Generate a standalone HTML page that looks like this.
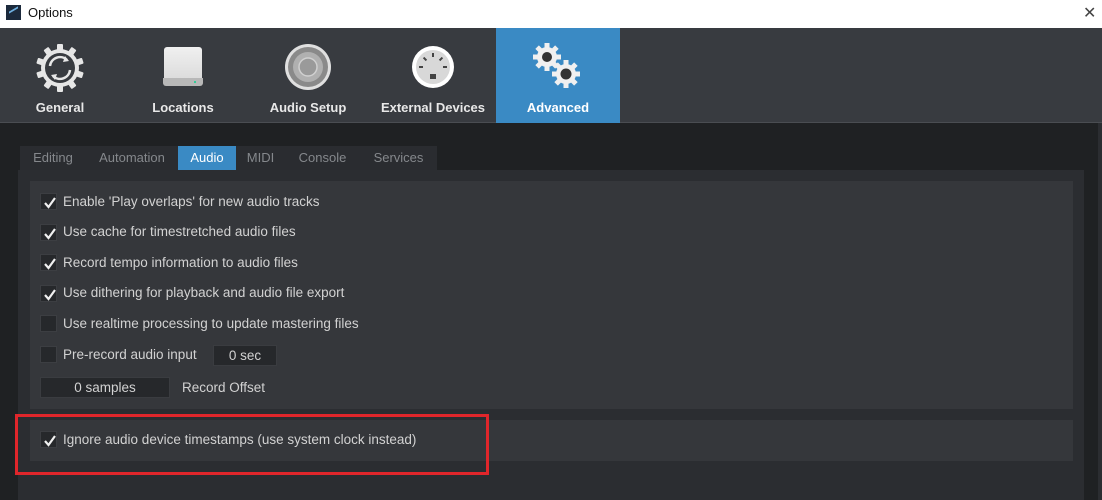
<!DOCTYPE html>
<html><head><meta charset="utf-8"><style>
*{margin:0;padding:0;box-sizing:border-box}
body{width:1102px;height:500px;overflow:hidden;background:#1f2123;font-family:"Liberation Sans",sans-serif;position:relative}
.a{position:absolute}
.title{left:0;top:0;width:1102px;height:28px;background:#fff}
.tb{left:0;top:28px;width:1102px;height:95px;background:#383b40;border-bottom:1px solid #4a4d52}
.lbl{position:absolute;top:100px;color:#e8e8e8;font-weight:bold;font-size:13px;text-align:center;width:124px}
.tab{position:absolute;top:146px;height:24px;line-height:24px;font-size:13px;color:#85888c;text-align:center;background:#2a2c30}
.cb{position:absolute;left:40px;width:17px;height:17px;background:#26282b;border:1px solid #3c3e42}
.cb svg{position:absolute;left:1px;top:1px}
.t{position:absolute;left:63px;font-size:13.5px;color:#d2d2d2}
.fld{position:absolute;background:#26282b;border:1px solid #3a3c40;color:#d2d2d2;font-size:13.5px;text-align:center}
</style></head><body>
<div class="a title"></div>
<div class="a" style="left:6px;top:5px;width:15px;height:15px;background:#1c2a3c"><div style="position:absolute;left:3px;top:4px;width:9px;height:7px;border-top:2px solid #6fb0e0;transform:skewY(-30deg)"></div></div>
<div class="a" style="left:28px;top:5px;font-size:13px;color:#111">Options</div>
<div class="a" style="left:1083px;top:3px;font-size:16px;color:#444">✕</div>
<div class="a tb"></div>
<div class="a" style="left:496px;top:28px;width:124px;height:95px;background:#3a8ac4"></div>
<svg class="a" style="left:34px;top:42px" width="52" height="52" viewBox="0 0 52 52">
<g fill="#e6e6e6"><circle cx="26" cy="26" r="19"/>
<g id="tt"><rect x="23" y="2" width="6" height="8" rx="1"/></g>
<use href="#tt" transform="rotate(36 26 26)"/><use href="#tt" transform="rotate(72 26 26)"/><use href="#tt" transform="rotate(108 26 26)"/><use href="#tt" transform="rotate(144 26 26)"/><use href="#tt" transform="rotate(180 26 26)"/><use href="#tt" transform="rotate(216 26 26)"/><use href="#tt" transform="rotate(252 26 26)"/><use href="#tt" transform="rotate(288 26 26)"/><use href="#tt" transform="rotate(324 26 26)"/></g>
<circle cx="26" cy="26" r="15" fill="#383b40"/>
<path d="M16 24a10 10 0 0 1 17-6M36 28a10 10 0 0 1-17 6" stroke="#e6e6e6" stroke-width="2.5" fill="none"/>
<path d="M31 14l4 5-6 1zM21 38l-4-5 6-1z" fill="#e6e6e6"/>
</svg>
<div class="a" style="left:164px;top:47px;width:38px;height:38px;background:linear-gradient(#f0f0f0,#d8d8d8);border-radius:3px"></div>
<div class="a" style="left:163px;top:78px;width:40px;height:8px;background:#b8b8b8;border-radius:0 0 3px 3px"></div>
<div class="a" style="left:194px;top:81px;width:2px;height:2px;background:#3c9"></div>
<svg class="a" style="left:284px;top:43px" width="48" height="48"><circle cx="24" cy="24" r="23" fill="#e0e0e0"/><circle cx="24" cy="24" r="20" fill="#8a8a8a"/><circle cx="24" cy="24" r="15" fill="#b0b0b0"/><circle cx="24" cy="24" r="9" fill="#9a9a9a" stroke="#d0d0d0" stroke-width="1.5"/></svg>
<svg class="a" style="left:411px;top:45px" width="44" height="44"><circle cx="22" cy="22" r="21" fill="#fff"/><circle cx="22" cy="22" r="17" fill="#d8d8d8"/><g fill="#444"><rect x="21" y="8" width="2" height="4"/><rect x="13" y="12" width="2" height="4" transform="rotate(-45 14 14)"/><rect x="29" y="12" width="2" height="4" transform="rotate(45 30 14)"/><rect x="8" y="21" width="4" height="2"/><rect x="32" y="21" width="4" height="2"/><rect x="19" y="29" width="6" height="5"/></g></svg>
<svg class="a" style="left:530px;top:40px" width="52" height="50">
<g fill="#f0f0f0"><circle cx="17" cy="17" r="10"/><g id="g2"><rect x="14.5" y="3" width="5" height="6"/></g><use href="#g2" transform="rotate(45 17 17)"/><use href="#g2" transform="rotate(90 17 17)"/><use href="#g2" transform="rotate(135 17 17)"/><use href="#g2" transform="rotate(180 17 17)"/><use href="#g2" transform="rotate(225 17 17)"/><use href="#g2" transform="rotate(270 17 17)"/><use href="#g2" transform="rotate(315 17 17)"/>
<g transform="translate(19 17)"><circle cx="17" cy="17" r="10"/><use href="#g2"/><use href="#g2" transform="rotate(45 17 17)"/><use href="#g2" transform="rotate(90 17 17)"/><use href="#g2" transform="rotate(135 17 17)"/><use href="#g2" transform="rotate(180 17 17)"/><use href="#g2" transform="rotate(225 17 17)"/><use href="#g2" transform="rotate(270 17 17)"/><use href="#g2" transform="rotate(315 17 17)"/></g></g>
<circle cx="17" cy="17" r="5" fill="#333"/><circle cx="36" cy="34" r="5.5" fill="#333"/></svg>
<div class="lbl" style="left:-2px">General</div>
<div class="lbl" style="left:121px">Locations</div>
<div class="lbl" style="left:246px">Audio Setup</div>
<div class="lbl" style="left:371px">External Devices</div>
<div class="lbl" style="left:496px;color:#fff">Advanced</div>
<div class="tab" style="left:20px;width:66px">Editing</div>
<div class="tab" style="left:86px;width:92px">Automation</div>
<div class="tab" style="left:178px;width:58px;background:#3a8ac4;color:#fff">Audio</div>
<div class="tab" style="left:236px;width:49px">MIDI</div>
<div class="tab" style="left:285px;width:75px">Console</div>
<div class="tab" style="left:360px;width:77px">Services</div>
<div class="a" style="left:18px;top:170px;width:1066px;height:330px;background:#2b2d31"></div>
<div class="a" style="left:30px;top:181px;width:1043px;height:228px;background:#35373b"></div>
<div class="a" style="left:30px;top:420px;width:1043px;height:41px;background:#35373b"></div>
<div class="a" style="left:1098px;top:123px;width:4px;height:377px;background:#2b2d31"></div>
<svg width="0" height="0" style="position:absolute"><defs><path id="ck" d="M3 8l3.5 4L13 3" stroke="#f0f0f0" stroke-width="2.2" fill="none"/></defs></svg>
<div class="cb" style="top:193px"><svg width="15" height="15"><use href="#ck"/></svg></div><div class="t" style="top:194px">Enable 'Play overlaps' for new audio tracks</div>
<div class="cb" style="top:224px"><svg width="15" height="15"><use href="#ck"/></svg></div><div class="t" style="top:224px">Use cache for timestretched audio files</div>
<div class="cb" style="top:254px"><svg width="15" height="15"><use href="#ck"/></svg></div><div class="t" style="top:255px">Record tempo information to audio files</div>
<div class="cb" style="top:285px"><svg width="15" height="15"><use href="#ck"/></svg></div><div class="t" style="top:285px">Use dithering for playback and audio file export</div>
<div class="cb" style="top:315px"></div><div class="t" style="top:316px">Use realtime processing to update mastering files</div>
<div class="cb" style="top:346px"></div><div class="t" style="top:347px">Pre-record audio input</div>
<div class="fld" style="left:213px;top:345px;width:64px;height:21px;line-height:19px">0 sec</div>
<div class="fld" style="left:40px;top:377px;width:130px;height:21px;line-height:19px">0 samples</div>
<div class="t" style="left:182px;top:380px">Record Offset</div>
<div class="cb" style="top:431px"><svg width="15" height="15"><use href="#ck"/></svg></div><div class="t" style="top:432px">Ignore audio device timestamps (use system clock instead)</div>
<div class="a" style="left:15px;top:414px;width:474px;height:61px;border:3px solid #e0262b"></div>
</body></html>
